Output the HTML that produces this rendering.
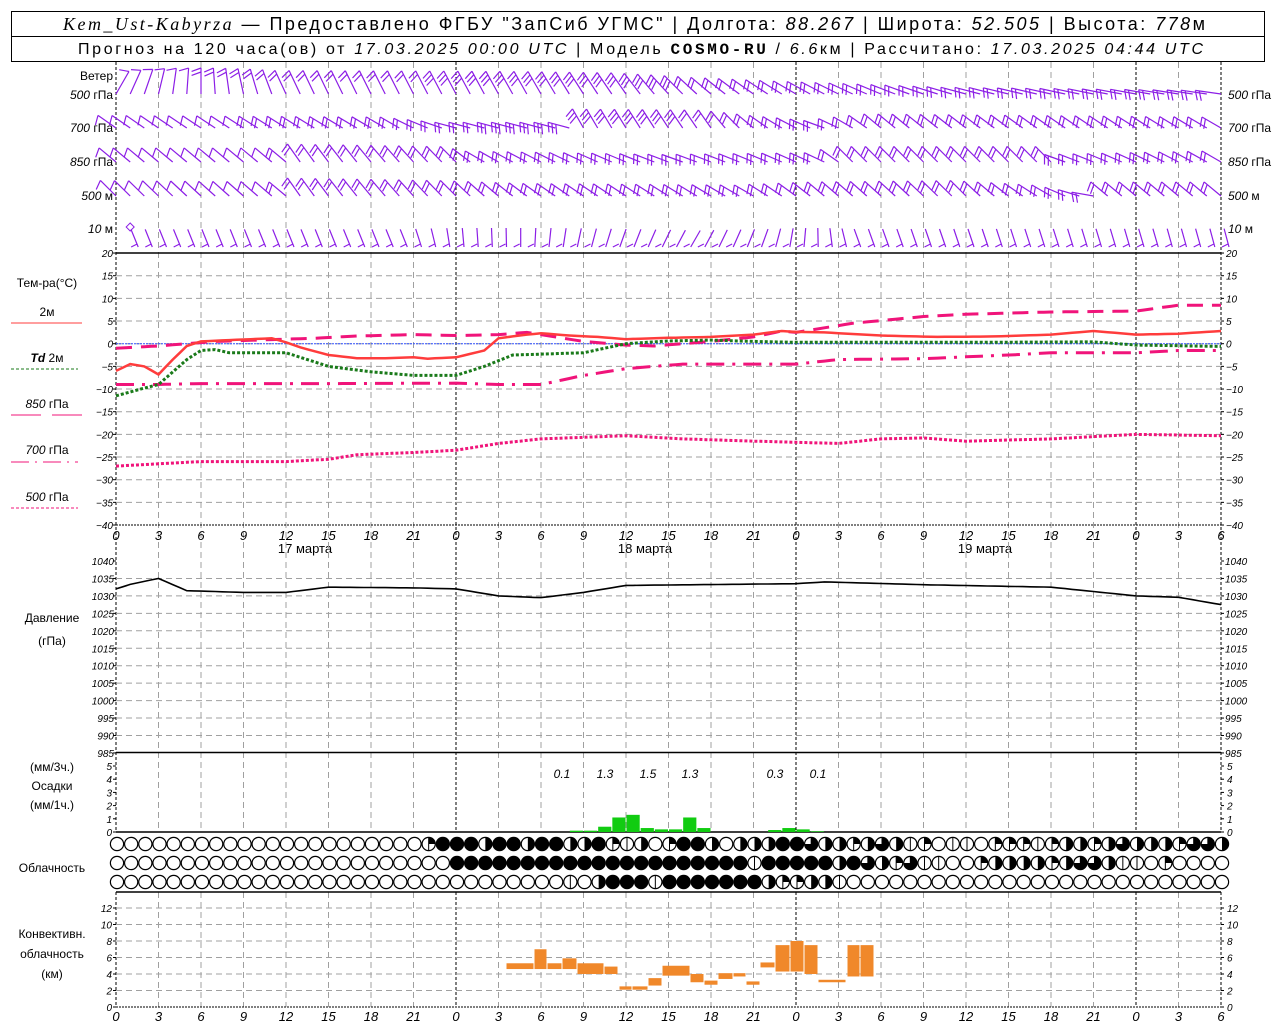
<!DOCTYPE html>
<html><head><meta charset="utf-8">
<style>
html,body{margin:0;padding:0;background:#fff;}
svg{display:block;}
text{font-family:"Liberation Sans",sans-serif;fill:#000;}
.ax{font-size:10px;font-style:italic;}
.xl{font-size:13px;font-style:italic;}
.lb{font-size:12px;}
</style></head>
<body>
<svg id="s" width="1280" height="1024" viewBox="0 0 1280 1024" xmlns="http://www.w3.org/2000/svg">
<rect x="0" y="0" width="1280" height="1024" fill="#fff"/>
<rect x="11.5" y="11.5" width="1253" height="50" fill="none" stroke="#000" stroke-width="1"/>
<line x1="11" y1="36.5" x2="1265" y2="36.5" stroke="#000"/>
<text x="63" y="30" textLength="1142" lengthAdjust="spacing" style="font-size:18px"><tspan font-style="italic" style="font-family:'Liberation Serif'">Kem_Ust-Kabyrza</tspan> — Предоставлено ФГБУ "ЗапСиб УГМС" | Долгота: <tspan font-style="italic">88.267</tspan> | Широта: <tspan font-style="italic">52.505</tspan> | Высота: <tspan font-style="italic">778</tspan>м</text>
<text x="78" y="54" textLength="1125" lengthAdjust="spacing" style="font-size:16px">Прогноз на 120 часа(ов) от <tspan font-style="italic">17.03.2025 00:00 UTC</tspan>  | Модель <tspan font-weight="bold" style="font-family:'Liberation Mono'">COSMO-RU</tspan> / <tspan font-style="italic">6.6</tspan>км | Рассчитано: <tspan font-style="italic">17.03.2025 04:44 UTC</tspan></text>

<text x="113" y="80" text-anchor="end" class="lb">Ветер</text>
<text x="113" y="99" text-anchor="end" class="lb"><tspan font-style="italic">500</tspan> гПа</text>
<text x="113" y="132" text-anchor="end" class="lb"><tspan font-style="italic">700</tspan> гПа</text>
<text x="113" y="166" text-anchor="end" class="lb"><tspan font-style="italic">850</tspan> гПа</text>
<text x="113" y="200" text-anchor="end" class="lb"><tspan font-style="italic">500</tspan> м</text>
<text x="113" y="233" text-anchor="end" class="lb"><tspan font-style="italic">10</tspan>   м</text>
<text x="1228" y="99" class="lb"><tspan font-style="italic">500</tspan> гПа</text>
<text x="1228" y="132" class="lb"><tspan font-style="italic">700</tspan> гПа</text>
<text x="1228" y="166" class="lb"><tspan font-style="italic">850</tspan> гПа</text>
<text x="1228" y="200" class="lb"><tspan font-style="italic">500</tspan> м</text>
<text x="1228" y="233" class="lb"><tspan font-style="italic">10</tspan>   м</text>

<text x="47" y="287" text-anchor="middle" class="lb">Тем-ра(°C)</text>
<text x="47" y="316" text-anchor="middle" class="lb">2м</text>
<line x1="11" y1="323" x2="82" y2="323" stroke="#ff3c3c" stroke-width="1"/>
<text x="47" y="362" text-anchor="middle" class="lb"><tspan font-style="italic" font-weight="bold">Td</tspan>  2м</text>
<line x1="11" y1="369" x2="78" y2="369" stroke="#1a7a1a" stroke-dasharray="3,2"/>
<text x="47" y="408" text-anchor="middle" class="lb"><tspan font-style="italic">850</tspan> гПа</text>
<line x1="11" y1="415" x2="82" y2="415" stroke="#f0147a" stroke-dasharray="30,11"/>
<text x="47" y="454" text-anchor="middle" class="lb"><tspan font-style="italic">700</tspan> гПа</text>
<line x1="11" y1="462" x2="78" y2="462" stroke="#f0147a" stroke-dasharray="18,6,2,6"/>
<text x="47" y="501" text-anchor="middle" class="lb"><tspan font-style="italic">500</tspan> гПа</text>
<line x1="11" y1="508" x2="78" y2="508" stroke="#f0147a" stroke-dasharray="3,2"/>

<text x="52" y="622" text-anchor="middle" class="lb">Давление</text>
<text x="52" y="645" text-anchor="middle" class="lb">(гПа)</text>

<text x="52" y="771" text-anchor="middle" class="lb">(мм/3ч.)</text>
<text x="52" y="790" text-anchor="middle" class="lb">Осадки</text>
<text x="52" y="809" text-anchor="middle" class="lb">(мм/1ч.)</text>
<text x="52" y="872" text-anchor="middle" class="lb">Облачность</text>
<text x="52" y="938" text-anchor="middle" class="lb">Конвективн.</text>
<text x="52" y="958" text-anchor="middle" class="lb">облачность</text>
<text x="52" y="978" text-anchor="middle" class="lb">(км)</text>

<text x="305" y="553" text-anchor="middle" style="font-size:13px">17 марта</text>
<text x="645" y="553" text-anchor="middle" style="font-size:13px">18 марта</text>
<text x="985" y="553" text-anchor="middle" style="font-size:13px">19 марта</text>

<g font-style="italic" style="font-size:12px">
<text x="562" y="778" text-anchor="middle">0.1</text>
<text x="605" y="778" text-anchor="middle">1.3</text>
<text x="648" y="778" text-anchor="middle">1.5</text>
<text x="690" y="778" text-anchor="middle">1.3</text>
<text x="775" y="778" text-anchor="middle">0.3</text>
<text x="818" y="778" text-anchor="middle">0.1</text>
</g>
<g id="g"></g>
</svg>
<script>
(function(){
var NS="http://www.w3.org/2000/svg",g=document.getElementById('g');
function el(t,a,txt){var e=document.createElementNS(NS,t);for(var k in a)e.setAttribute(k,a[k]);if(txt!=null)e.textContent=txt;g.appendChild(e);return e;}
function X(h){return 116+h*14.1667;}
var L=116,R=1221;
var segs=[[62,832],[892,1007]];
for(var h=0;h<=78;h+=3){
  var day=(h%24==0)||h==78;
  segs.forEach(function(s){
    el('line',{x1:X(h),y1:s[0],x2:X(h),y2:s[1],stroke:day?'#000':'#a0a0a0','stroke-width':1,'stroke-dasharray':day?'3,2':'6,4'});
  });
}
function TY(t){return 343.7-t*4.533;}
for(var t=15;t>=-35;t-=5){el('line',{x1:L,y1:TY(t),x2:R,y2:TY(t),stroke:'#a0a0a0','stroke-dasharray':'6,4'});}
for(var t=20;t>=-40;t-=5){var y=TY(t);
 el('text',{x:L-3,y:y+4,'text-anchor':'end','class':'ax'},String(t).replace('-','−'));
 el('text',{x:R+5,y:y+4,'class':'ax'},String(t).replace('-','−'));
 el('line',{x1:L-3,y1:y,x2:L,y2:y,stroke:'#000'});el('line',{x1:R,y1:y,x2:R+3,y2:y,stroke:'#000'});}
el('line',{x1:L,y1:TY(0),x2:R,y2:TY(0),stroke:'#3050ff','stroke-width':1,'stroke-dasharray':'2,1'});
function PY(p){return 561+(1040-p)*3.49;}
for(var p=1035;p>=990;p-=5){el('line',{x1:L,y1:PY(p),x2:R,y2:PY(p),stroke:'#a0a0a0','stroke-dasharray':'6,4'});}
for(var p=1040;p>=985;p-=5){var y=PY(p);
 el('text',{x:L-2,y:y+4,'text-anchor':'end','class':'ax'},p);
 el('text',{x:R+4,y:y+4,'class':'ax'},p);
 el('line',{x1:L-3,y1:y,x2:L,y2:y,stroke:'#000'});el('line',{x1:R,y1:y,x2:R+3,y2:y,stroke:'#000'});}
function RY(v){return 832-v*13.2;}
for(var v=0;v<=5;v++){var y=RY(v);
 el('text',{x:L-4,y:y+4,'text-anchor':'end','class':'ax'},v);el('text',{x:R+6,y:y+4,'class':'ax'},v);
 el('line',{x1:L-3,y1:y,x2:L,y2:y,stroke:'#000'});el('line',{x1:R,y1:y,x2:R+3,y2:y,stroke:'#000'});}
function CY(v){return 1007-v*8.25;}
for(var v=2;v<=12;v+=2){el('line',{x1:L,y1:CY(v),x2:R,y2:CY(v),stroke:'#a0a0a0','stroke-dasharray':'6,4'});}
for(var v=0;v<=12;v+=2){var y=CY(v);
 el('text',{x:L-4,y:y+4,'text-anchor':'end','class':'ax'},v);el('text',{x:R+6,y:y+4,'class':'ax'},v);
 el('line',{x1:L-3,y1:y,x2:L,y2:y,stroke:'#000'});el('line',{x1:R,y1:y,x2:R+3,y2:y,stroke:'#000'});}
[253,752.5,832].forEach(function(y){el('line',{x1:L,y1:y,x2:R,y2:y,stroke:'#000','stroke-width':1.5});});
el('line',{x1:L,y1:892,x2:R,y2:892,stroke:'#000','stroke-width':1.5});
el('line',{x1:L,y1:525,x2:R,y2:525,stroke:'#000','stroke-dasharray':'2,1'});
el('line',{x1:L,y1:1007,x2:R,y2:1007,stroke:'#000','stroke-dasharray':'2,1'});
for(var h=0;h<=78;h+=3){var lab=String(h%24);
 el('text',{x:X(h),y:540,'text-anchor':'middle','class':'xl'},lab);
 el('text',{x:X(h),y:1021,'text-anchor':'middle','class':'xl'},lab);}
function interp(pts,h){for(var i=0;i<pts.length-1;i++){if(h>=pts[i][0]&&h<=pts[i+1][0]){var f=(h-pts[i][0])/(pts[i+1][0]-pts[i][0]);return pts[i][1]+f*(pts[i+1][1]-pts[i][1]);}}return pts[pts.length-1][1];}
function curve(pts,fy,attrs){var d='';for(var h=0;h<=78;h+=0.5){d+=(h?'L':'M')+X(h).toFixed(1)+','+fy(interp(pts,h)).toFixed(1);}attrs.d=d;attrs.fill='none';el('path',attrs);}
var t500=[[0,-27],[3,-26.5],[6,-26],[12,-26],[15,-25.5],[17,-24.5],[21,-24],[24,-23.5],[27,-22],[30,-21],[36,-20.3],[40,-21],[45,-21.5],[51,-22],[54,-21],[57,-20.8],[60,-21.5],[66,-21],[72,-20],[78,-20.3]];
var t700=[[0,-9],[3,-9],[6,-8.8],[15,-8.8],[24,-8.7],[27,-9],[30,-9],[33,-7],[36,-5.5],[40,-4.5],[48,-4.5],[51,-3.5],[57,-3.3],[63,-2.5],[66,-2],[72,-2],[75,-1.5],[78,-1.5]];
var t850=[[0,-1],[3,-0.5],[5,0],[7,0.5],[10,0.8],[14,1.2],[17,1.7],[21,2],[24,1.8],[27,2],[29,2.5],[31,1.5],[33,0.5],[36,-0.3],[38,-0.5],[40,0],[42,0.5],[45,1.5],[47,2.8],[48,2.5],[52,4.5],[57,6],[60,6.5],[66,7],[72,7.2],[75,8.5],[78,8.5]];
var td=[[0,-11.5],[2,-9.8],[3,-9],[5,-3.5],[6,-1.5],[7,-1.3],[8,-2],[12,-2],[15,-5],[18,-6.2],[21,-7],[24,-7],[26,-5],[28,-2.5],[30,-2.3],[33,-2],[36,0],[39,0.6],[42,0.8],[45,0.5],[48,0.3],[60,0.3],[69,0.4],[72,-0.3],[78,-0.6]];
var t2=[[0,-6],[1,-4.5],[2,-5],[3,-6.8],[4,-3.5],[5,-0.5],[6,0.5],[8,0.8],[11,1.2],[12,0.3],[13,-0.8],[15,-2.5],[17,-3.2],[19,-3.2],[21,-3],[22,-3.3],[24,-3],[26,-1.5],[27,1.2],[29,2],[30,2.3],[32,1.8],[34,1.5],[36,1],[39,1.3],[42,1.5],[45,2],[47,2.8],[48,2.6],[50,2.5],[54,1.8],[58,1.5],[62,1.6],[66,2],[69,2.8],[72,2],[75,2.2],[78,2.8]];
curve(t500,TY,{stroke:'#f0147a','stroke-width':3,'stroke-dasharray':'3,2'});
curve(t700,TY,{stroke:'#f0147a','stroke-width':3,'stroke-dasharray':'18,8,3,8'});
curve(t850,TY,{stroke:'#f0147a','stroke-width':3,'stroke-dasharray':'16,9'});
curve(td,TY,{stroke:'#1a7a1a','stroke-width':3,'stroke-dasharray':'3,2'});
curve(t2,TY,{stroke:'#ff3c3c','stroke-width':2.5});
var pr=[[0,1032],[1,1033.3],[3,1035],[5,1031.5],[9,1031],[12,1031],[15,1032.5],[21,1032.3],[24,1032],[27,1030],[30,1029.5],[33,1031],[36,1033],[48,1033.5],[50,1034],[57,1033.2],[66,1032.5],[72,1030],[75,1029.6],[78,1027.5]];
curve(pr,PY,{stroke:'#000','stroke-width':1.6});
[[33,0.1],[34,0.1],[35,0.4],[36,1.1],[37,1.3],[38,0.3],[39,0.2],[40,0.2],[41,1.1],[42,0.3],[47,0.15],[48,0.3],[49,0.2],[50,0.05]].forEach(function(b){
 el('rect',{x:X(b[0]-1)+0.5,y:RY(b[1]),width:13.2,height:832-RY(b[1]),fill:'#11cc11'});});
[[506,534,4.6,5.3],[534,547,4.6,7],[547,562,4.6,5.3],[562,577,4.6,5.9],[577,604,4,5.3],[604,618,4,4.9],[619,632,2.1,2.5],[632,648,2.1,2.5],[648,662,2.6,3.5],[662,690,3.8,5],[690,704,3,4],[704,718,2.7,3.2],[718,733,3.4,4.1],[733,746,3.7,4.1],[746,760,2.7,3.1],[760,775,4.8,5.4],[775,790,4.3,7.5],[790,804,4.3,8],[804,818,4,7.5],[818,846,3,3.3],[847,860,3.7,7.5],[860,874,3.7,7.5]].forEach(function(b){
 el('rect',{x:b[0]+0.5,y:CY(b[3]),width:b[1]-b[0]-1,height:CY(b[2])-CY(b[3]),fill:'#f0882a'});});
function rep(c,n){return new Array(n+1).join(c);}
var rows=[
 rep('o',22)+'qfffhffhffhhfqlho'+'qffhohhhffthhqhthlqolloqqqlqhhqhthhhqtth',
 rep('o',24)+rep('f',21)+'l'+'fffff'+'hfthqtlloo'+'qhhhhqhtthllo'+'qoooo',
 rep('o',32)+'lo'+'h'+'fffl'+'fffffff'+'hqqhhl'+rep('o',27)
];
var ry=[844,863,882];
rows.forEach(function(r,ri){for(var h=0;h<=78;h++){var c=r.charAt(h)||'o',cx=X(h)+1,cy=ry[ri],rr=6.6;
 el('circle',{cx:cx,cy:cy,r:rr,fill:c=='f'?'#000':'#fff',stroke:'#000','stroke-width':1.2});
 if(c=='h'||c=='t')el('path',{d:'M'+cx+','+(cy-rr)+' A'+rr+','+rr+' 0 0 1 '+cx+','+(cy+rr)+' Z',fill:'#000'});
 if(c=='t')el('path',{d:'M'+cx+','+cy+' L'+cx+','+(cy+rr)+' A'+rr+','+rr+' 0 0 1 '+(cx-rr)+','+cy+' Z',fill:'#000'});
 if(c=='q')el('path',{d:'M'+cx+','+cy+' L'+cx+','+(cy-rr)+' A'+rr+','+rr+' 0 0 1 '+(cx+rr)+','+cy+' Z',fill:'#000'});
 if(c=='l'||c=='q'||c=='t')el('line',{x1:cx,y1:cy-rr,x2:cx,y2:cy+rr,stroke:'#000'});
}});
var col='#8c1ee6';
function barb(x,y,ang,len,n){var a=ang*Math.PI/180,dx=Math.cos(a),dy=Math.sin(a);
 var ex=x+dx*len,ey=y+dy*len,d='M'+x.toFixed(1)+','+y.toFixed(1)+'L'+ex.toFixed(1)+','+ey.toFixed(1);
 var fa=(ang-110)*Math.PI/180,fx=Math.cos(fa),fy=Math.sin(fa);
 for(var i=0;i<n;i++){var px=x+dx*(len-i*4),py=y+dy*(len-i*4),fl=10;
  d+='M'+px.toFixed(1)+','+py.toFixed(1)+'L'+(px+fx*fl).toFixed(1)+','+(py+fy*fl).toFixed(1);}
 el('path',{d:d,stroke:col,'stroke-width':1.2,fill:'none'});}
var levels=[
 {y:94,len:26,a:[[0,-60],[4,-82],[8,-98],[12,-115],[24,-118],[30,-120],[36,-125],[42,-140],[48,-150],[60,-165],[78,-172]],n:[[0,1],[12,2],[33,3],[48,2],[78,2]]},
 {y:128,len:22,a:[[0,-145],[20,-150],[24,-165],[32,-165],[33,-120],[42,-125],[46,-145],[50,-160],[54,-140],[78,-150]],n:[[0,1],[20,2],[33,3],[48,2],[78,2]]},
 {y:162,len:22,a:[[0,-140],[12,-140],[13,-125],[24,-135],[26,-150],[40,-160],[50,-155],[52,-135],[66,-135],[67,-160],[78,-150]],n:[[0,1],[24,2],[48,2],[78,2]]},
 {y:196,len:22,a:[[0,-135],[12,-140],[13,-125],[24,-135],[30,-145],[45,-150],[50,-140],[60,-135],[66,-150],[69,-170],[70,-140],[78,-140]],n:[[0,1],[24,2],[48,2],[78,2]]},
 {y:247,len:19,a:[[1,-112],[20,-112],[24,-95],[28,-90],[33,-75],[40,-60],[45,-70],[48,-85],[52,-110],[78,-105]],n:[[0,1],[78,1]]}
];
levels.forEach(function(Lv,li){for(var h=0;h<=78;h++){
 if(li==4&&h==0){el('path',{d:'M'+X(1)+',223 l4,4 l-4,4 l-4,-4 z',stroke:col,fill:'none'});continue;}
 var ang=interp(Lv.a,h),n=Math.round(interp(Lv.n,h));
 if(li==4){var a=ang*Math.PI/180,x=X(h)+8,y=Lv.y,ex=x+Math.cos(a)*Lv.len,ey=y+Math.sin(a)*Lv.len;
   el('path',{d:'M'+ex.toFixed(1)+','+ey.toFixed(1)+'L'+x.toFixed(1)+','+y+'M'+(x-1)+','+(y-3)+'l-6,3',stroke:col,'stroke-width':1.2,fill:'none'});}
 else barb(X(h),Lv.y,ang,Lv.len,n);
}});
})();
</script>
</body></html>
